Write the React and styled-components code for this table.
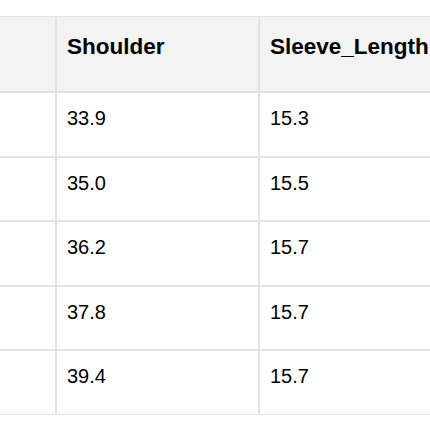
import React from "react";
import styled, { createGlobalStyle } from "styled-components";

const GlobalStyle = createGlobalStyle`
  html, body {
    margin: 0;
    padding: 0;
    background: #ffffff;
  }
  body {
    font-family: "Liberation Sans", Arial, sans-serif;
    color: #000000;
  }
`;

const Page = styled.div`
  width: 430px;
  height: 430px;
  overflow: hidden;
  padding-top: 16px;
  box-sizing: border-box;
`;

const Table = styled.table`
  border-collapse: separate;
  border-spacing: 0;
  table-layout: fixed;
  width: 462px;
`;

const Col = styled.col`
  width: ${(p) => p.$w}px;
`;

const HeadCell = styled.th`
  background: #f3f3f3;
  border: 1px solid #e2e2e2;
  border-left: ${(p) => (p.$edge ? "none" : "1px solid #e2e2e2")};
  padding: 17px 10px 31px 10px;
  font-size: 22.5px;
  line-height: 26px;
  font-weight: 700;
  text-align: left;
  color: #000000;
  white-space: nowrap;
`;

const Cell = styled.td`
  border: 1px solid #e2e2e2;
  border-left: ${(p) => (p.$edge ? "none" : "1px solid #e2e2e2")};
  padding: 13px 10px 25.6px 10px;
  font-size: 20px;
  line-height: 24px;
  text-align: left;
  color: #000000;
  white-space: nowrap;
`;

const rows = [
  { shoulder: "33.9", sleeve: "15.3" },
  { shoulder: "35.0", sleeve: "15.5" },
  { shoulder: "36.2", sleeve: "15.7" },
  { shoulder: "37.8", sleeve: "15.7" },
  { shoulder: "39.4", sleeve: "15.7" },
];

export default function App() {
  return (
    <>
      <GlobalStyle />
      <Page>
        <Table>
          <colgroup>
            <Col $w={56} />
            <Col $w={203} />
            <Col $w={203} />
          </colgroup>
          <thead>
            <tr>
              <HeadCell $edge />
              <HeadCell>Shoulder</HeadCell>
              <HeadCell>Sleeve_Length</HeadCell>
            </tr>
          </thead>
          <tbody>
            {rows.map((r, i) => (
              <tr key={i}>
                <Cell $edge />
                <Cell>{r.shoulder}</Cell>
                <Cell>{r.sleeve}</Cell>
              </tr>
            ))}
          </tbody>
        </Table>
      </Page>
    </>
  );
}
